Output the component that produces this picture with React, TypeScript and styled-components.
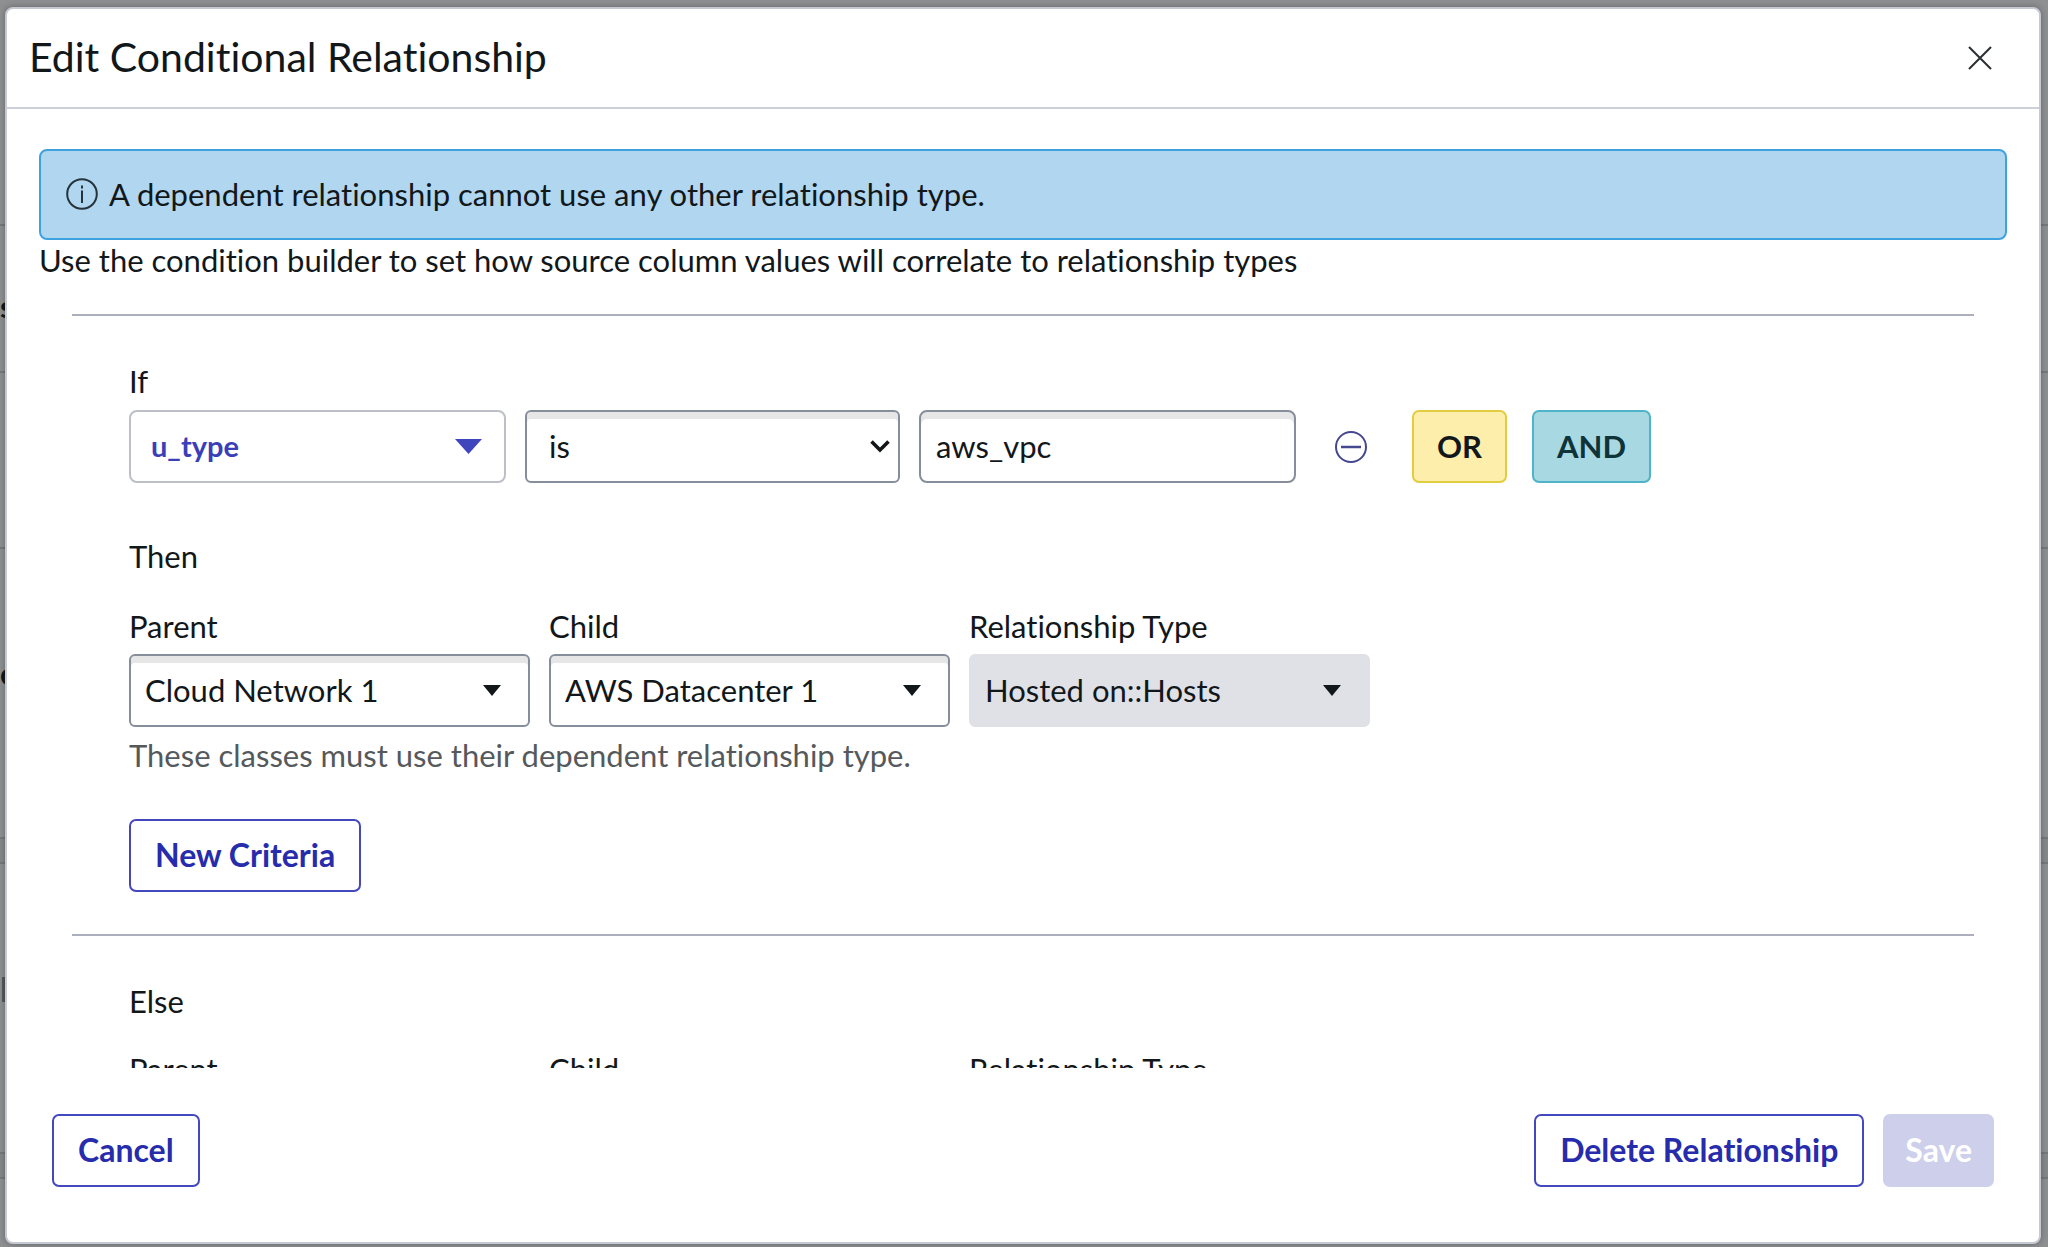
import React, { useId, useState } from "react";
import styled, { createGlobalStyle } from "styled-components";

const GlobalStyle = createGlobalStyle`
  *, *::before, *::after { box-sizing: border-box; }
  html, body, #root { height: 100%; }
  body {
    margin: 0;
    overflow: hidden;
    background: #8e8f91;
    color: #12171a;
    font-family: Lato, "Liberation Sans", sans-serif;
    font-size: 31px;
    font-variant-ligatures: none;
    line-height: 36px;
  }
  button, input, select { font: inherit; color: inherit; margin: 0; }
`;

/* The dimmed page that stays visible around the dialog's edges. */
const Page = styled.div`
  position: absolute;
  inset: 0;
  overflow: hidden;
`;

const PageRow = styled.div<{ $height: number; $top?: number; $band?: boolean }>`
  height: ${(p) => p.$height}px;
  padding-top: ${(p) => p.$top ?? 0}px;
  border-bottom: 2px solid #76787c;
  background: ${(p) => (p.$band ? "#868789" : "transparent")};
  font-weight: 700;
`;

const PageBar = styled.div`
  width: 3px;
  height: 25px;
  margin-left: 2px;
  background: #55585c;
`;

const Backdrop = styled.div`
  position: relative;
  display: flex;
  height: 100%;
  padding: 7px 7px 3px 5px;
`;

const Dialog = styled.section`
  display: flex;
  flex: 1;
  flex-direction: column;
  min-width: 0;
  border: 2px solid #c5c9d3;
  border-radius: 8px;
  background: #fff;
  box-shadow: 0 0 6px rgba(0, 0, 0, 0.3);
`;

const Header = styled.header`
  display: flex;
  align-items: center;
  justify-content: space-between;
  height: 100px;
  padding: 0 41px 0 22px;
  border-bottom: 2px solid #cbd0d6;
`;

const Title = styled.h2`
  margin: 0;
  padding-bottom: 2px;
  font-size: 41px;
  font-weight: 400;
  line-height: 48px;
`;

const IconButton = styled.button`
  display: grid;
  place-items: center;
  width: 36px;
  height: 36px;
  padding: 0;
  border: 0;
  background: none;
`;

const Body = styled.div`
  flex: 1;
  min-height: 0;
  overflow: hidden;
  padding: 40px 32px 0;
`;

const Alert = styled.div`
  display: flex;
  align-items: center;
  gap: 11px;
  height: 91px;
  padding: 0 25px 2px;
  border: 2px solid #3fa2e0;
  border-radius: 8px;
  background: #b0d6f0;
`;

const Intro = styled.p`
  margin: 2px 0 36px;
`;

const Rule = styled.hr`
  height: 2px;
  margin: 0 33px;
  border: 0;
  background: #abb0bc;
`;

const Section = styled.div`
  display: flex;
  flex-direction: column;
  align-items: flex-start;
  padding: 0 90px;
`;

const Heading = styled.div<{ $top: number }>`
  margin-top: ${(p) => p.$top}px;
`;

const ConditionRow = styled.div`
  display: flex;
  align-items: center;
  gap: 19px;
  margin-top: 11px;
`;

const ClassRow = styled.div<{ $top: number }>`
  display: flex;
  gap: 19px;
  margin-top: ${(p) => p.$top}px;
`;

const Field = styled.div`
  display: flex;
  flex-direction: column;
  gap: 10px;
  width: 401px;
`;

const SelectWrap = styled.div<{ $width: string; $right: number }>`
  display: grid;
  align-items: center;
  width: ${(p) => p.$width};

  > * { grid-area: 1 / 1; }
  > svg {
    justify-self: end;
    margin-right: ${(p) => p.$right}px;
    pointer-events: none;
  }
`;

type Tone = "plain" | "pill" | "muted";

const boxBorder = { plain: "#868d9b", pill: "#bcc0c6", muted: "#e0e1e6" };

const StyledSelect = styled.select<{ $tone: Tone; $indent: number }>`
  appearance: none;
  width: 100%;
  height: 73px;
  padding: 0 60px 2px ${(p) => p.$indent}px;
  border: 2px solid ${(p) => boxBorder[p.$tone]};
  border-radius: ${(p) => (p.$tone === "pill" ? 8 : 6)}px;
  background: ${(p) => (p.$tone === "muted" ? "#e0e1e6" : "#fff")};
  box-shadow: ${(p) => (p.$tone === "plain" ? "inset 0 7px 0 #e6e6e6" : "none")};
  color: ${(p) => (p.$tone === "pill" ? "#3a3fb8" : "#12171a")};
  font-size: ${(p) => (p.$tone === "pill" ? 29 : 31)}px;
  font-weight: ${(p) => (p.$tone === "pill" ? 700 : 400)};
  opacity: 1;
`;

const TextInput = styled.input`
  width: 377px;
  height: 73px;
  padding: 0 15px 2px;
  border: 2px solid #868d9b;
  border-radius: 8px;
  background: #fff;
  box-shadow: inset 0 7px 0 #e6e6e6;
`;

const Operators = styled.div`
  display: flex;
  align-items: center;
  gap: 25px;
  margin-left: 24px;
`;

const RemoveSlot = styled.div`
  margin-left: 18px;
`;

type ButtonTone = "outline" | "primary" | "or" | "and";

const buttonTones: Record<ButtonTone, { fill: string; edge: string; text: string; pad: number; size: number }> = {
  outline: { fill: "#fff", edge: "#4448bd", text: "#262cab", pad: 24, size: 32 },
  primary: { fill: "#cdcfeb", edge: "#cdcfeb", text: "#fff", pad: 20, size: 32 },
  or: { fill: "#fdeeac", edge: "#e2cc40", text: "#12171a", pad: 23, size: 31 },
  and: { fill: "#a8d8e2", edge: "#4fb4c9", text: "#0e3338", pad: 23, size: 31 },
};

const Button = styled.button<{ $tone: ButtonTone }>`
  height: 73px;
  padding: 0 ${(p) => buttonTones[p.$tone].pad}px 2px;
  border: 2px solid ${(p) => buttonTones[p.$tone].edge};
  border-radius: 7px;
  background: ${(p) => buttonTones[p.$tone].fill};
  color: ${(p) => buttonTones[p.$tone].text};
  font-size: ${(p) => buttonTones[p.$tone].size}px;
  font-weight: 700;
  white-space: nowrap;
`;

const Hint = styled.p`
  margin: 10px 0 0;
  color: #55595c;
`;

const NewCriteria = styled.div`
  margin: 46px 0 42px;
`;

const Footer = styled.footer`
  display: flex;
  gap: 19px;
  padding: 46px 45px 55px;
`;

const Spacer = styled.div`
  flex: 1;
`;

const Triangle = ({ width, height, fill }: { width: number; height: number; fill: string }) => (
  <svg width={width} height={height} viewBox="0 0 20 12" preserveAspectRatio="none" aria-hidden="true">
    <path d="M0 0h20L10 12z" fill={fill} />
  </svg>
);

const Chevron = () => (
  <svg width="20" height="13" viewBox="0 0 20 13" fill="none" aria-hidden="true">
    <path d="M1.5 1.5L10 10l8.5-8.5" stroke="#12171a" strokeWidth="3.6" />
  </svg>
);

function ClassSelect({ label, value, tone = "plain" }: { label: string; value: string; tone?: Tone }) {
  const id = useId();
  return (
    <Field>
      <label htmlFor={id}>{label}</label>
      <SelectWrap $width="100%" $right={29}>
        <StyledSelect id={id} $tone={tone} $indent={14} disabled={tone === "muted"}>
          <option>{value}</option>
        </StyledSelect>
        <Triangle width={18} height={11} fill="#12171a" />
      </SelectWrap>
    </Field>
  );
}

const ClassFields = ({ top }: { top: number }) => (
  <ClassRow $top={top}>
    <ClassSelect label="Parent" value="Cloud Network 1" />
    <ClassSelect label="Child" value="AWS Datacenter 1" />
    <ClassSelect label="Relationship Type" value="Hosted on::Hosts" tone="muted" />
  </ClassRow>
);

export default function App() {
  const [value, setValue] = useState("aws_vpc");
  return (
    <>
      <GlobalStyle />
      <Page aria-hidden="true">
        <PageRow $height={226} />
        <PageRow $height={147} $top={62}>s</PageRow>
        <PageRow $height={176} />
        <PageRow $height={290} $top={106}>e</PageRow>
        <PageRow $height={25} $band />
        <PageRow $height={290} $top={113}>
          <PageBar />
        </PageRow>
        <PageRow $height={25} $band />
      </Page>
      <Backdrop>
        <Dialog role="dialog" aria-labelledby="dialog-title">
          <Header>
            <Title id="dialog-title">Edit Conditional Relationship</Title>
            <IconButton aria-label="Close">
              <svg width="24" height="24" viewBox="0 0 24 24" fill="none" aria-hidden="true">
                <path d="M1 1l22 22M23 1L1 23" stroke="#2b2f32" strokeWidth="2" />
              </svg>
            </IconButton>
          </Header>
          <Body>
            <Alert role="status">
              <svg width="32" height="32" viewBox="0 0 32 32" fill="none" aria-hidden="true">
                <circle cx="16" cy="16" r="14.8" stroke="#25333b" strokeWidth="2" />
                <path d="M16 12.5V25M16 7.5v3" stroke="#25333b" strokeWidth="2" />
              </svg>
              A dependent relationship cannot use any other relationship type.
            </Alert>
            <Intro>Use the condition builder to set how source column values will correlate to relationship types</Intro>
            <Rule />
            <Section>
              <Heading $top={47}>If</Heading>
              <ConditionRow>
                <SelectWrap $width="377px" $right={24}>
                  <StyledSelect aria-label="Source column" $tone="pill" $indent={20}>
                    <option>u_type</option>
                  </StyledSelect>
                  <Triangle width={27} height={15} fill="#3f45bc" />
                </SelectWrap>
                <SelectWrap $width="375px" $right={10}>
                  <StyledSelect aria-label="Operator" $tone="plain" $indent={22}>
                    <option>is</option>
                  </StyledSelect>
                  <Chevron />
                </SelectWrap>
                <TextInput aria-label="Value" value={value} onChange={(e) => setValue(e.target.value)} />
                <RemoveSlot>
                  <IconButton aria-label="Remove condition">
                    <svg width="34" height="34" viewBox="0 0 34 34" fill="none" aria-hidden="true">
                      <circle cx="17" cy="17" r="15" stroke="#45478f" strokeWidth="2" />
                      <path d="M7 17h20" stroke="#45478f" strokeWidth="2.5" />
                    </svg>
                  </IconButton>
                </RemoveSlot>
                <Operators>
                  <Button $tone="or">OR</Button>
                  <Button $tone="and">AND</Button>
                </Operators>
              </ConditionRow>
              <Heading $top={55}>Then</Heading>
              <ClassFields top={34} />
              <Hint>These classes must use their dependent relationship type.</Hint>
              <NewCriteria>
                <Button $tone="outline">New Criteria</Button>
              </NewCriteria>
            </Section>
            <Rule />
            <Section>
              <Heading $top={47}>Else</Heading>
              <ClassFields top={32} />
            </Section>
          </Body>
          <Footer>
            <Button $tone="outline">Cancel</Button>
            <Spacer />
            <Button $tone="outline">Delete Relationship</Button>
            <Button $tone="primary" disabled>Save</Button>
          </Footer>
        </Dialog>
      </Backdrop>
    </>
  );
}
